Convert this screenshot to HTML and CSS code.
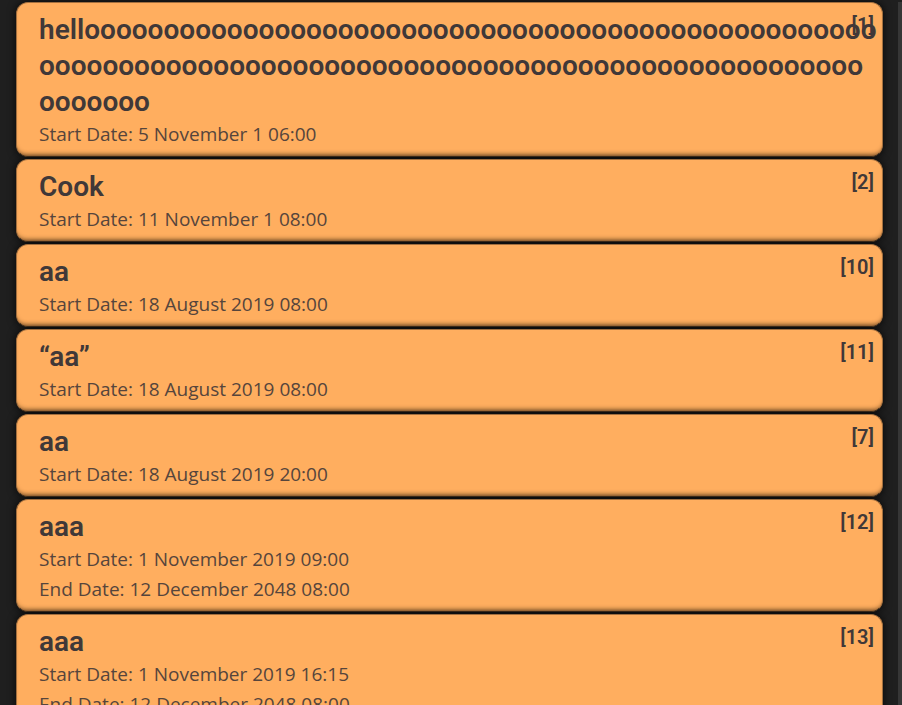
FILE: index.html
```
<!DOCTYPE html>
<html lang="en">
<head>
<meta charset="utf-8">
<title>Tasks</title>
<link rel="stylesheet" href="styles.css">
</head>
<body>
<main class="panel">
<ul class="tasks">
<li class="card"><h2 class="title">hellooooooooooooooooooooooooooooooooooooooooooooooooooooooooooooooooooooooooooooooooooooooooooooooooooooooooooooo</h2><p class="date">Start Date: 5 November 1 06:00</p><span class="index">[1]</span></li>
<li class="card"><h2 class="title">Cook</h2><p class="date">Start Date: 11 November 1 08:00</p><span class="index">[2]</span></li>
<li class="card"><h2 class="title">aa</h2><p class="date">Start Date: 18 August 2019 08:00</p><span class="index">[10]</span></li>
<li class="card"><h2 class="title">“aa”</h2><p class="date">Start Date: 18 August 2019 08:00</p><span class="index">[11]</span></li>
<li class="card"><h2 class="title">aa</h2><p class="date">Start Date: 18 August 2019 20:00</p><span class="index">[7]</span></li>
<li class="card"><h2 class="title">aaa</h2><p class="date">Start Date: 1 November 2019 09:00</p><p class="date">End Date: 12 December 2048 08:00</p><span class="index">[12]</span></li>
<li class="card"><h2 class="title">aaa</h2><p class="date">Start Date: 1 November 2019 16:15</p><p class="date">End Date: 12 December 2048 08:00</p><span class="index">[13]</span></li>
</ul>
<div class="track"></div>
</main>
</body>
</html>
```
FILE: styles.css
```
* {
  box-sizing: border-box;
  margin: 0;
  padding: 0;
}

body {
  background: #1f1f1f;
  color: #403838;
}

.panel {
  display: flex;
  height: 100vh;
  padding-top: 2px;
  overflow: hidden;
}

.tasks {
  flex: 1;
  min-width: 0;
  display: flex;
  flex-direction: column;
  gap: 2px;
  padding: 0 15px 0 16px;
  list-style: none;
}

.track {
  width: 4px;
  background: #363636;
}

.card {
  position: relative;
  flex: none;
  padding: 9px 4px 7px 22px;
  border: 1px solid #a36f3e;
  border-bottom-color: #4a3520;
  border-radius: 12px;
  background: #ffae5f;
  box-shadow: 0 0 8px rgba(0, 0, 0, 0.8), inset 0 -4px 4px -3px rgba(60, 35, 10, 0.6);
}

.title {
  margin-bottom: -1px;
  font: 600 28px/36px Roboto, sans-serif;
  overflow-wrap: anywhere;
}

.date {
  font: 400 19px/30px "Open Sans", sans-serif;
  color: #56453c;
}

.index {
  position: absolute;
  top: 9px;
  right: 8px;
  font: 600 20px/26px Roboto, sans-serif;
}
```
